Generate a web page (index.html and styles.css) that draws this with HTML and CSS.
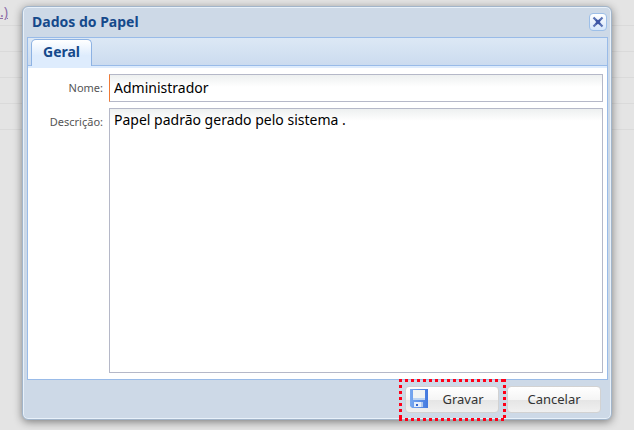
FILE: index.html
```html
<!DOCTYPE html>
<html lang="pt-BR">
<head>
<meta charset="utf-8">
<meta name="viewport" content="width=device-width, initial-scale=1">
<title>Dados do Papel</title>
<link rel="stylesheet" href="styles.css">
</head>
<body>
<div class="backdrop"><a class="backdrop-link" href="#">.)</a></div>
<form class="dialog" role="dialog" aria-labelledby="dialog-title">
  <header class="dialog-header">
    <h1 id="dialog-title" class="dialog-title">Dados do Papel</h1>
    <button type="button" class="close" aria-label="Fechar">
      <svg width="12" height="12" viewBox="0 0 12 12" aria-hidden="true"><path d="M1.5 1.5 10.5 10.5M10.5 1.5 1.5 10.5" fill="none" stroke="#5a72b5" stroke-width="2.2"/><path d="M4 4 8 8M8 4 4 8" fill="none" stroke="#3c54a4" stroke-width="2.2"/></svg>
    </button>
  </header>
  <main class="panel">
    <nav class="tabs"><button type="button" class="tab">Geral</button></nav>
    <div class="fields">
      <label class="label" for="nome">Nome:</label>
      <input class="field field-name" id="nome" type="text" value="Administrador">
      <label class="label" for="descricao">Descrição:</label>
      <textarea class="field" id="descricao">Papel padrão gerado pelo sistema .</textarea>
    </div>
  </main>
  <footer class="actions">
    <div class="highlight">
      <button type="submit" class="button">
        <svg class="disk" width="18" height="19" viewBox="0 0 18 19" aria-hidden="true">
          <defs><linearGradient id="disk-fill" x2="1" y2="0"><stop stop-color="#79a9f0"/><stop offset="1" stop-color="#4379df"/></linearGradient></defs>
          <path d="M0 0H18V19H2L0 17Z" fill="url(#disk-fill)"/>
          <path d="M3 1H15V10H3Z" fill="#f1f4f4"/>
          <path d="M3 9H15V11H3Z" fill="#bed5f2"/>
          <path d="M4 13H13V18H4Z" fill="#e6eefb"/>
          <path d="M6 15H8V17H6Z" fill="#3565cc"/>
          <path d="M11 13H13V18H11Z" fill="#b2caee"/>
        </svg>
        <span class="button-text">Gravar</span>
      </button>
    </div>
    <button type="button" class="button">Cancelar</button>
  </footer>
</form>
</body>
</html>
```
FILE: styles.css
```css
* { box-sizing: border-box; }

body {
  margin: 0;
  min-height: 100vh;
  display: flex;
  padding: 6px 22px 10px;
  background: #e4e4e4;
  font-family: Tahoma, "Noto Sans", sans-serif;
  font-size: 14px;
}

.backdrop {
  position: absolute;
  inset: 0 0 auto;
  height: 130px;
  background: repeating-linear-gradient(#e4e4e4 0 25px, #dadada 25px 26px);
}

.backdrop-link {
  display: block;
  padding-top: 3px;
  line-height: 18px;
  color: #8d6fa8;
}

.dialog {
  position: relative;
  flex: 1;
  display: flex;
  flex-direction: column;
  padding: 0 3px 0 4px;
  border: 1px solid #a2b5ca;
  border-radius: 6px;
  background: #cdd9e7;
  box-shadow: inset 0 0 0 1px #e8f1fa, 0 2px 8px rgba(0, 0, 0, .45);
}

.dialog-header {
  display: flex;
  align-items: center;
  justify-content: space-between;
  height: 30px;
  padding: 0 1px 0 5px;
}

.dialog-title {
  margin: 0;
  font-size: 14px;
  line-height: 20px;
  color: #15498b;
}

.close {
  display: grid;
  place-items: center;
  width: 18px;
  height: 18px;
  padding: 0;
  border: 1px solid #9dbfe8;
  border-radius: 4px;
  background: linear-gradient(#fff, #d5e6fb);
}

.panel {
  flex: 1;
  display: flex;
  flex-direction: column;
  border: 1px solid #99bbe8;
  background: #fff;
}

.tabs {
  display: flex;
  align-items: flex-end;
  height: 30px;
  padding: 0 3px;
  border-bottom: 2px solid #deecfd;
  background: linear-gradient(#dce8f5, #cbdbef);
  box-shadow: inset 0 -1px #99bbe8;
}

.tab {
  height: 27px;
  padding: 0 11px 2px;
  border: 1px solid #8db2e3;
  border-bottom: 0;
  border-radius: 5px 5px 0 0;
  background: linear-gradient(#fff, #deecfd 60%);
  color: #15498b;
  font: bold 14px/22px Tahoma, "Noto Sans", sans-serif;
}

.fields {
  flex: 1;
  display: grid;
  grid-template: 28px 1fr / 75px 1fr;
  gap: 6px;
  padding: 6px 4px 6px 0;
}

.label {
  font-size: 11px;
  line-height: 28px;
  text-align: right;
  color: #555;
}

.field {
  width: 100%;
  margin: 0;
  padding: 0 4px;
  border: 1px solid #b5b8c8;
  border-radius: 0;
  outline: 0;
  background: linear-gradient(#edf0f0, #fff 12px);
  color: #000;
  font: 14px/22px Tahoma, "Noto Sans", sans-serif;
  resize: none;
}

.field-name { border-left-color: #f07a35; }

.actions {
  display: flex;
  justify-content: flex-end;
  align-items: flex-start;
  gap: 1px;
  height: 39px;
  padding-right: 7px;
}

.highlight {
  position: relative;
  padding-right: 7px;
}

.highlight::after {
  content: "";
  position: absolute;
  inset: -1px 0 -8px -6px;
  pointer-events: none;
  --dots-x: repeating-linear-gradient(90deg, #ff0018 0 3px, transparent 3px 6px);
  --dots-y: repeating-linear-gradient(#ff0018 0 3px, transparent 3px 6px);
  background:
    var(--dots-x) top / 100% 3px no-repeat,
    var(--dots-x) bottom / 100% 3px no-repeat,
    var(--dots-y) left / 3px 100% no-repeat,
    var(--dots-y) right / 3px 100% no-repeat;
}

.button {
  display: flex;
  align-items: center;
  justify-content: center;
  width: 94px;
  height: 27px;
  margin-top: 6px;
  padding: 0 4px 2px;
  border: 1px solid #d2d2d2;
  border-radius: 4px;
  background: linear-gradient(#fff, #f5f5f5 50%, #e5e5e5 52%, #f0f0f0);
  color: #333;
  font: 13px/20px Tahoma, "Noto Sans", sans-serif;
}

.button-text { flex: 1; padding-left: 4px; }
```
